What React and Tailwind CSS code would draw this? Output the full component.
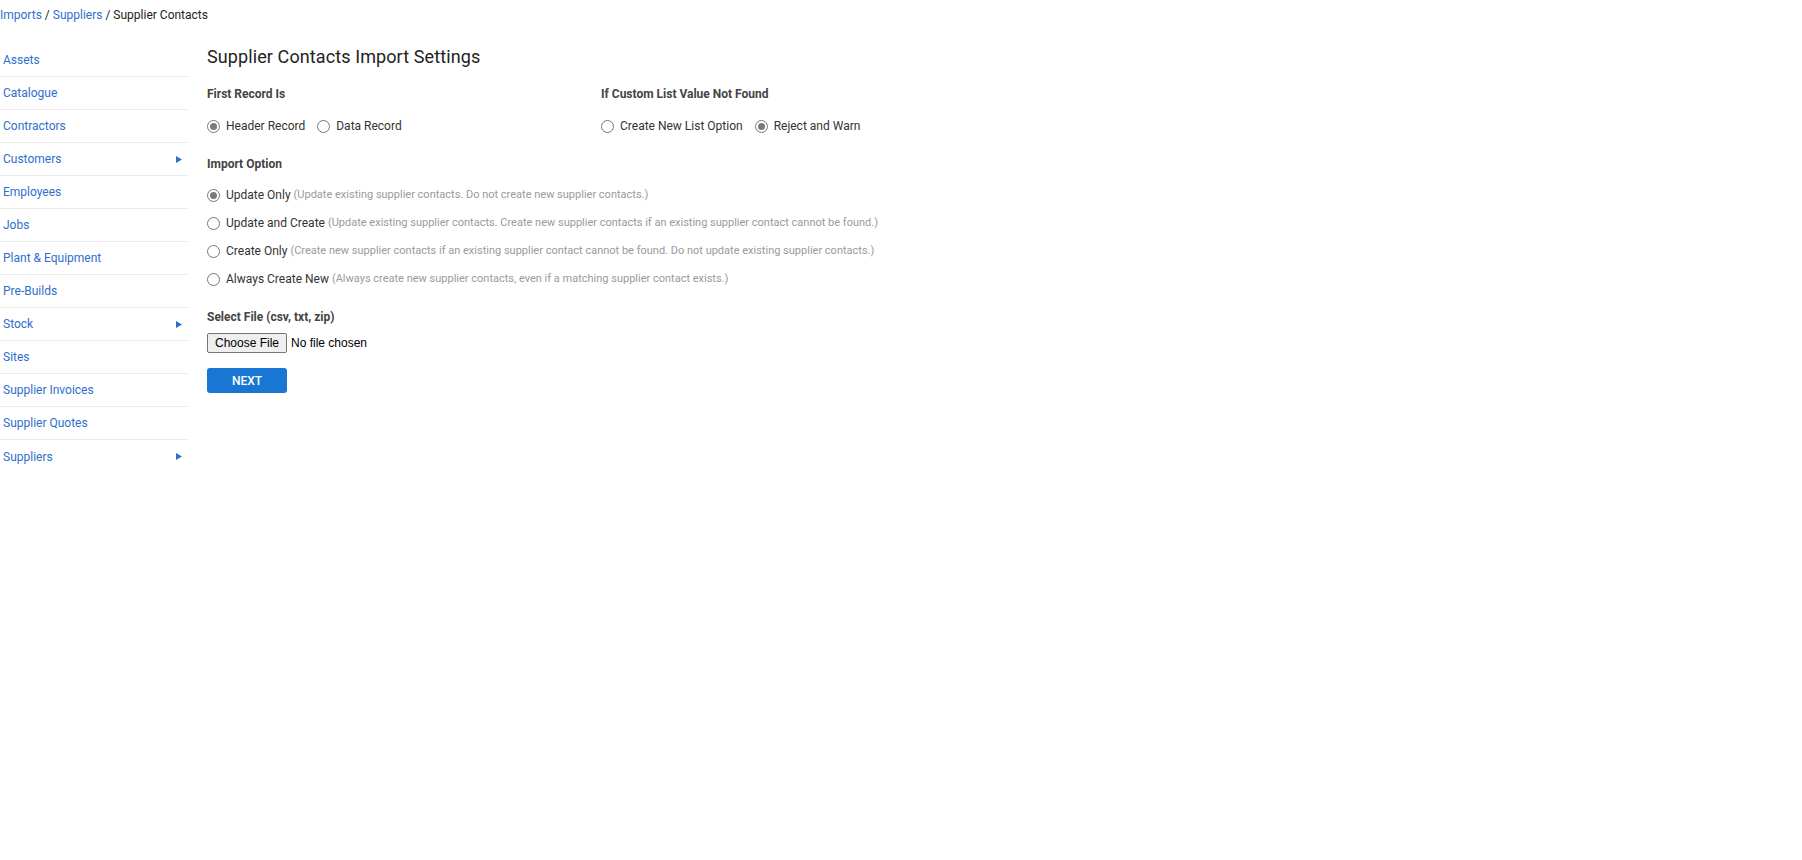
import React from 'react';

const menu = [
    {label: 'Assets'},
    {label: 'Catalogue'},
    {label: 'Contractors'},
    {label: 'Customers', sub: true},
    {label: 'Employees'},
    {label: 'Jobs'},
    {label: 'Plant & Equipment'},
    {label: 'Pre-Builds'},
    {label: 'Stock', sub: true},
    {label: 'Sites'},
    {label: 'Supplier Invoices'},
    {label: 'Supplier Quotes'},
    {label: 'Suppliers', sub: true},
];

const importOptions = [
    {label: 'Update Only', hint: '(Update existing supplier contacts. Do not create new supplier contacts.)', checked: true},
    {label: 'Update and Create', hint: '(Update existing supplier contacts. Create new supplier contacts if an existing supplier contact cannot be found.)'},
    {label: 'Create Only', hint: '(Create new supplier contacts if an existing supplier contact cannot be found. Do not update existing supplier contacts.)'},
    {label: 'Always Create New', hint: '(Always create new supplier contacts, even if a matching supplier contact exists.)'},
];

const Radio = ({checked}) => (
    <span className="w-[13px] h-[13px] rounded-full border border-[#767676] bg-white flex items-center justify-center shrink-0">
        {checked && <span className="w-[7px] h-[7px] rounded-full bg-[#7a7a7a]" />}
    </span>
);

const RadioLabel = ({checked, children}) => (
    <label className="flex items-center gap-[6px] h-4 text-[12px] text-[#333]">
        <Radio checked={checked} />
        <span>{children}</span>
    </label>
);

const SectionLabel = ({children}) => (
    <div className="text-[12px] leading-4 font-bold text-[#444]">{children}</div>
);

export default function App() {
    return (
        <div className="min-h-[860px] bg-white font-['Roboto',sans-serif]">
            <div className="h-[30px] flex items-center text-[12px] text-[#222] whitespace-pre">
                <a className="text-[#2e6fcc]">Imports</a>
                <span> / </span>
                <a className="text-[#2e6fcc]">Suppliers</a>
                <span> / </span>
                <span>Supplier Contacts</span>
            </div>

            <div className="flex">
                <div className="w-[188px] pt-[14px] shrink-0">
                    {menu.map((item, i) => (
                        <div
                            key={item.label}
                            className={
                                i < menu.length - 1
                                    ? 'h-[33px] border-b border-[#ebebeb] flex items-center justify-between pl-[3px] pr-[6px] text-[12px] text-[#2e6fcc]'
                                    : 'h-[33px] flex items-center justify-between pl-[3px] pr-[6px] text-[12px] text-[#2e6fcc]'
                            }
                        >
                            <span>{item.label}</span>
                            {item.sub && (
                                <svg width="6" height="7" viewBox="0 0 6 7">
                                    <path d="M0 0 L6 3.5 L0 7 Z" fill="#2e6fcc" />
                                </svg>
                            )}
                        </div>
                    ))}
                </div>

                <div className="ml-[19px] pt-[15px] flex flex-col">
                    <h1 className="text-[18px] leading-6 text-[#222] tracking-[0.1px]">Supplier Contacts Import Settings</h1>

                    <div className="flex mt-[17px]">
                        <div className="w-[394px] flex flex-col gap-4">
                            <SectionLabel>First Record Is</SectionLabel>
                            <div className="flex gap-[12px]">
                                <RadioLabel checked>Header Record</RadioLabel>
                                <RadioLabel>Data Record</RadioLabel>
                            </div>
                        </div>
                        <div className="flex flex-col gap-4">
                            <SectionLabel>If Custom List Value Not Found</SectionLabel>
                            <div className="flex gap-[12px]">
                                <RadioLabel>Create New List Option</RadioLabel>
                                <RadioLabel checked>Reject and Warn</RadioLabel>
                            </div>
                        </div>
                    </div>

                    <div className="mt-[22px]">
                        <SectionLabel>Import Option</SectionLabel>
                    </div>
                    <div className="mt-[15px] flex flex-col gap-[12px]">
                        {importOptions.map((opt) => (
                            <label key={opt.label} className="flex items-center gap-[6px] h-4 text-[12px] text-[#333]">
                                <Radio checked={opt.checked} />
                                <span>{opt.label}</span>
                                <span className="text-[11px] text-[#9a9a9a] -ml-[3px]">{opt.hint}</span>
                            </label>
                        ))}
                    </div>

                    <div className="mt-[22px]">
                        <SectionLabel>Select File (csv, txt, zip)</SectionLabel>
                    </div>
                    <div className="mt-[8px] flex items-center h-[20px] text-[12px] font-['Liberation_Sans',sans-serif] text-black">
                        <span className="h-[20px] w-[80px] flex items-center justify-center bg-[#efefef] border border-[#767676] rounded-[2px]">
                            Choose File
                        </span>
                        <span className="ml-[4px]">No file chosen</span>
                    </div>

                    <button className="mt-[15px] w-[80px] h-[25px] rounded-[3px] bg-[#1976d2] text-white text-[12px] font-medium">
                        NEXT
                    </button>
                </div>
            </div>
        </div>
    );
}
